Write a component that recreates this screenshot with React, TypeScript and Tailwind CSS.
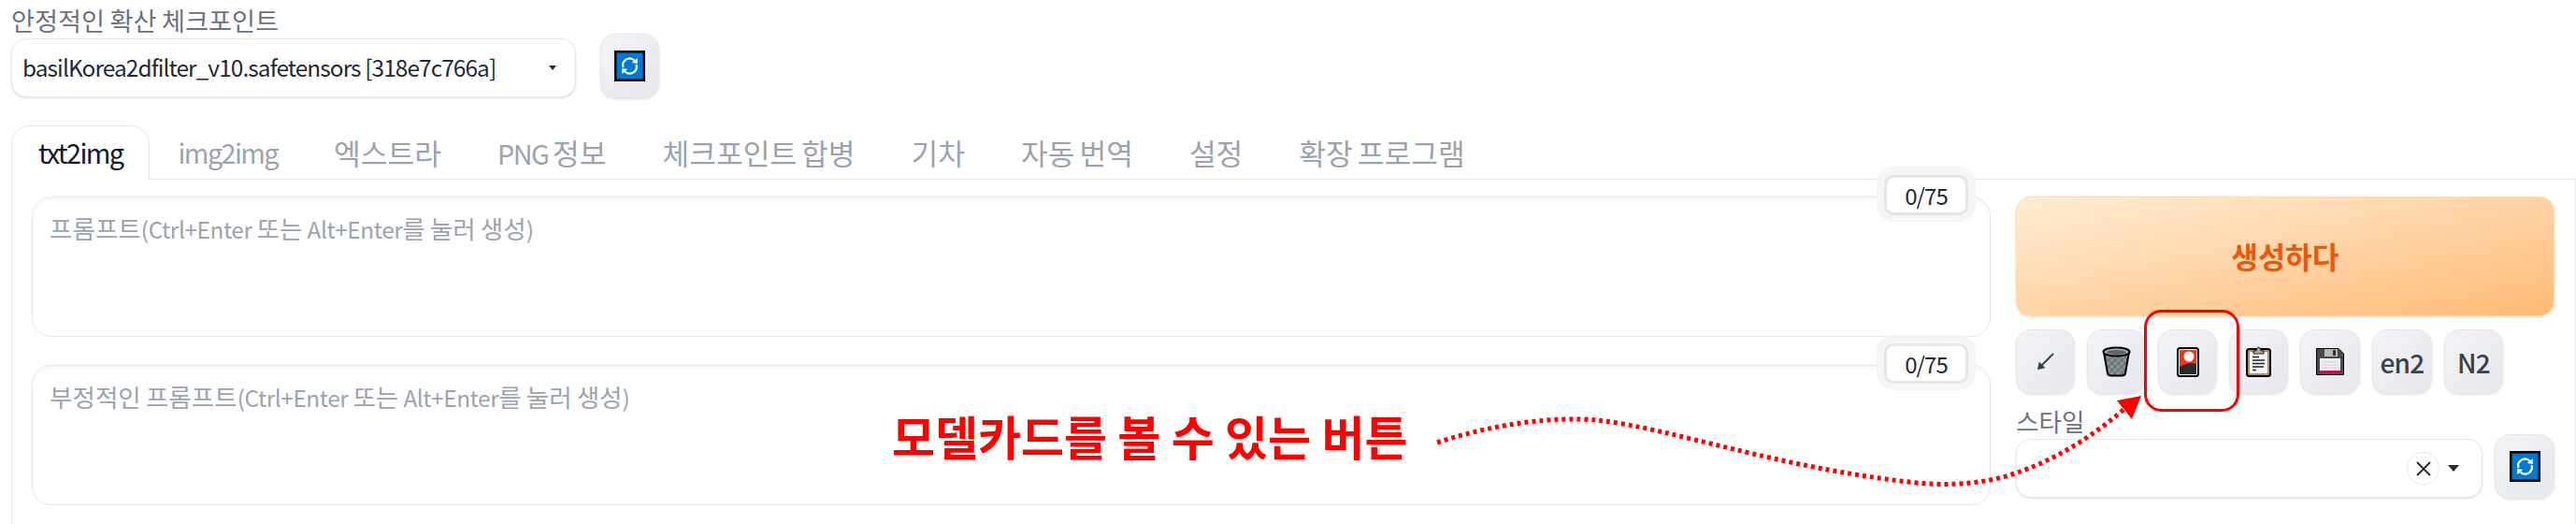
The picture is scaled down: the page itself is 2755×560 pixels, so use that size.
import { Fragment } from "react";

const FONT = '"Noto Sans CJK KR", "Noto Sans", sans-serif';

function T({ s, hangul = "text-[1.09em]", latin = "tracking-[-0.04em]" }: { s: string; hangul?: string; latin?: string }) {
  const runs = s.match(/[\uac00-\ud7a3]+|[^\uac00-\ud7a3]+/g) ?? [];
  return (
    <Fragment>
      {runs.map((r, i) =>
        /[\uac00-\ud7a3]/.test(r) ? (
          <span key={i} className={hangul}>{r}</span>
        ) : (
          <span key={i} className={latin}>{r}</span>
        )
      )}
    </Fragment>
  );
}

function RefreshIcon() {
  return (
    <svg width="33" height="33" viewBox="0 0 33 33">
      <rect x="1.25" y="1.25" width="30.5" height="30.5" fill="#0078d7" stroke="#000" strokeWidth="2.5" />
      <path d="M9.5 18 A7.3 7.3 0 0 1 21.5 10.5" fill="none" stroke="#fff" strokeWidth="2.2" />
      <path d="M23.5 15 A7.3 7.3 0 0 1 11.5 22.5" fill="none" stroke="#fff" strokeWidth="2.2" />
      <path d="M24.8 8 L24.8 14 L18.8 13 Z" fill="#fff" />
      <path d="M8.2 25 L8.2 19 L14.2 20 Z" fill="#fff" />
    </svg>
  );
}

function ArrowIcon() {
  return (
    <svg width="19" height="19" viewBox="0 0 19 19">
      <path d="M18 1 L4 15" stroke="#374151" strokeWidth="2" />
      <path d="M1 18 L2.8 9.6 L9.4 16.2 Z" fill="#374151" />
    </svg>
  );
}

function TrashIcon() {
  return (
    <svg width="31" height="33" viewBox="0 0 31 33">
      <defs>
        <pattern id="mesh" width="5" height="5" patternUnits="userSpaceOnUse" patternTransform="rotate(45)">
          <rect width="5" height="5" fill="#8a9396" />
          <path d="M0 0H5M0 0V5" stroke="#4b5254" strokeWidth="1.2" />
        </pattern>
      </defs>
      <path d="M2 6 L6 29 Q6.5 31.5 10 31.5 H21 Q24.5 31.5 25 29 L29 6 Z" fill="url(#mesh)" stroke="#000" strokeWidth="2" />
      <ellipse cx="15.5" cy="6" rx="14" ry="4.6" fill="#a7afb2" stroke="#000" strokeWidth="2" />
      <ellipse cx="15.5" cy="6.5" rx="10.5" ry="2.4" fill="#5e6669" />
    </svg>
  );
}

function CardIcon() {
  return (
    <svg width="24" height="32" viewBox="0 0 24 32">
      <rect x="1" y="1" width="22" height="30" rx="2.5" fill="#f0f0f0" stroke="#000" strokeWidth="2" />
      <rect x="3" y="3" width="18" height="26" fill="#f03a17" />
      <path d="M3 21 Q13 15.5 21 18 V29 H3 Z" fill="#2b2b2b" />
      <ellipse cx="13" cy="10" rx="5.4" ry="5.6" fill="#f7f7f7" />
    </svg>
  );
}

function ClipboardIcon() {
  return (
    <svg width="27" height="33" viewBox="0 0 27 33">
      <rect x="1" y="3" width="25" height="29" rx="2.5" fill="#b98d5f" stroke="#000" strokeWidth="2" />
      <rect x="4" y="6" width="19" height="23" fill="#f7f7f7" />
      <path d="M8 5 H11 Q11.5 1 13.5 1 Q15.5 1 16 5 H19 V8 H8 Z" fill="#a9adb0" stroke="#222" strokeWidth="1" />
      <path d="M7 11.5H14M7 15H20M7 18.5H20M7 22H19M7 25.5H11" stroke="#222" strokeWidth="1.3" />
    </svg>
  );
}

function FloppyIcon() {
  return (
    <svg width="30" height="29" viewBox="0 0 30 29">
      <path d="M0.5 0.5 H24 L29.5 6 V28.5 H0.5 Z" fill="#4a4a4a" stroke="#000" strokeWidth="1" />
      <rect x="9" y="1" width="14" height="8" fill="#b8b8b8" />
      <rect x="18" y="2" width="3" height="6" fill="#333" />
      <rect x="4" y="11" width="22" height="15" fill="#f0f0f0" />
      <path d="M6 15H24M6 18H24M6 21H24" stroke="#d0d0d0" strokeWidth="1" />
      <rect x="4" y="24" width="22" height="2.5" fill="#e3005c" />
    </svg>
  );
}

function IconButton({ children, w }: { children: React.ReactNode; w: string }) {
  return (
    <div className={`${w} flex h-[69px] items-center justify-center rounded-[16px] border border-[#e5e7eb] bg-gradient-to-br from-[#f3f4f6] to-[#e5e7eb] text-[28px] font-medium tracking-[-0.03em] text-[#374151] shadow-sm`}>
      {children}
    </div>
  );
}

function Counter() {
  return (
    <div className="absolute right-[23px] -top-[24px] flex h-[43px] w-[90px] items-center justify-center rounded-[10px] border-[3px] border-[#e5e7eb] bg-white text-[24px] text-[#1f2937] shadow-[0_-1px_0_8px_#f5f5f5]">
      <T s="0/75" />
    </div>
  );
}

function PromptBox({ text }: { text: string }) {
  return (
    <div className="relative h-[150px] rounded-[20px] border border-[#e5e7eb] bg-white px-[18px] py-[15px] text-[24.4px] leading-[36px] text-[#9ca3af] shadow-[inset_0_2px_4px_rgba(0,0,0,0.05)]">
      <T s={text} latin="tracking-[-0.017em]" />
      <Counter />
    </div>
  );
}

const tabs = ["img2img", "엑스트라", "PNG 정보", "체크포인트 합병", "기차", "자동 번역", "설정", "확장 프로그램"];

export default function App() {
  return (
    <div className="relative h-[560px] w-[2755px] overflow-hidden bg-white" style={{ fontFamily: FONT }}>
      <div className="px-3 pt-[6px]">
        <div className="h-[30px] text-[24.4px] leading-[30px] text-[#6b7280]"><T s="안정적인 확산 체크포인트" hangul="text-[1.115em]" latin="tracking-normal" /></div>
        <div className="flex items-start gap-[26px]">
          <div className="mt-[5px] flex h-[63px] w-[604px] items-center justify-between rounded-[16px] border border-[#e5e7eb] bg-white pl-[11px] pr-[20px] text-[24.4px] whitespace-nowrap text-[#1f2937] shadow-sm">
            <span className="tracking-[-0.037em]">basilKorea2dfilter_v10.safetensors [318e7c766a]</span>
            <span className="h-0 w-0 border-x-[4px] border-t-[5px] border-x-transparent border-t-[#1f2937]" />
          </div>
          <IconButton w="w-[63px]"><RefreshIcon /></IconButton>
        </div>
        <div className="relative z-10 mt-[29px] flex h-[58px] text-[28.8px] text-[#9ca3af]">
          <div className="flex items-center rounded-t-[20px] border border-[#e5e7eb] border-b-white bg-white px-[28px] text-[#111827]"><T s="txt2img" latin="tracking-[-0.055em]" /></div>
          {tabs.map((t) => (
            <div key={t} className="flex items-center whitespace-pre px-[30px]"><span><T s={t} hangul="text-[1.085em]" latin="tracking-[-0.055em]" /></span></div>
          ))}
        </div>
      </div>
      <div className="ml-3 -mt-px flex h-[400px] gap-[27px] border border-[#e5e7eb] pl-[21px] pr-[21px] pt-[18px]">
        <div className="flex w-[2095px] flex-col gap-[30px]">
          <PromptBox text="프롬프트(Ctrl+Enter 또는 Alt+Enter를 눌러 생성)" />
          <PromptBox text="부정적인 프롬프트(Ctrl+Enter 또는 Alt+Enter를 눌러 생성)" />
        </div>
        <div className="flex w-[576px] flex-col">
          <div className="flex h-[128px] items-center justify-center rounded-[16px] border border-[#fed7aa] bg-gradient-to-br from-[#ffedd5] to-[#fdba74] text-[28.8px] font-bold text-[#ea580c] shadow-sm"><T s="생성하다" /></div>
          <div className="mt-[14px] flex gap-[13px]">
            <IconButton w="w-[63px]"><ArrowIcon /></IconButton>
            <IconButton w="w-[63px]"><TrashIcon /></IconButton>
            <IconButton w="w-[63px]"><CardIcon /></IconButton>
            <IconButton w="w-[63px]"><ClipboardIcon /></IconButton>
            <IconButton w="w-[64px]"><FloppyIcon /></IconButton>
            <IconButton w="w-[64px]">en2</IconButton>
            <IconButton w="w-[63px]">N2</IconButton>
          </div>
          <div className="mt-[11px] flex items-end gap-[13px]">
            <div className="flex-1">
              <div className="mb-[1px] h-[36px] text-[24.4px] leading-[36px] text-[#6b7280]"><T s="스타일" /></div>
              <div className="mb-[1px] flex h-[63px] items-center justify-end rounded-[16px] border border-[#e5e7eb] bg-white pr-[24px] shadow-sm">
                <div className="mr-[9px] flex h-[35px] w-[35px] items-center justify-center rounded-full border border-[#e5e7eb]">
                  <svg width="16" height="16" viewBox="0 0 16 16"><path d="M1 1L15 15M15 1L1 15" stroke="#1f2937" strokeWidth="1.8" /></svg>
                </div>
                <span className="h-0 w-0 border-x-[6.5px] border-t-[7px] border-x-transparent border-t-[#1f2937]" />
              </div>
            </div>
            <IconButton w="w-[64px]"><RefreshIcon /></IconButton>
          </div>
        </div>
      </div>

      <div className="absolute left-[954px] top-[432px] text-[50px] font-bold leading-[66px] whitespace-nowrap text-[#ff0000]">모델카드를 볼 수 있는 버튼</div>
      <svg className="pointer-events-none absolute left-0 top-0" width="2755" height="560" viewBox="0 0 2755 560">
        <rect x="2294.5" y="332.5" width="99" height="106" rx="17" fill="none" stroke="#ff0000" strokeWidth="3" />
        <path d="M1537 473 C1600 452 1665 445 1708 449 C1790 458 1900 500 2050 516 C2090 520 2130 516 2163 503 C2200 490 2240 465 2272 437" fill="none" stroke="#ff0000" strokeWidth="5" strokeDasharray="4 4" />
        <path d="M2290 423 L2264 428 L2280 448 Z" fill="#ff0000" />
      </svg>
    </div>
  );
}
